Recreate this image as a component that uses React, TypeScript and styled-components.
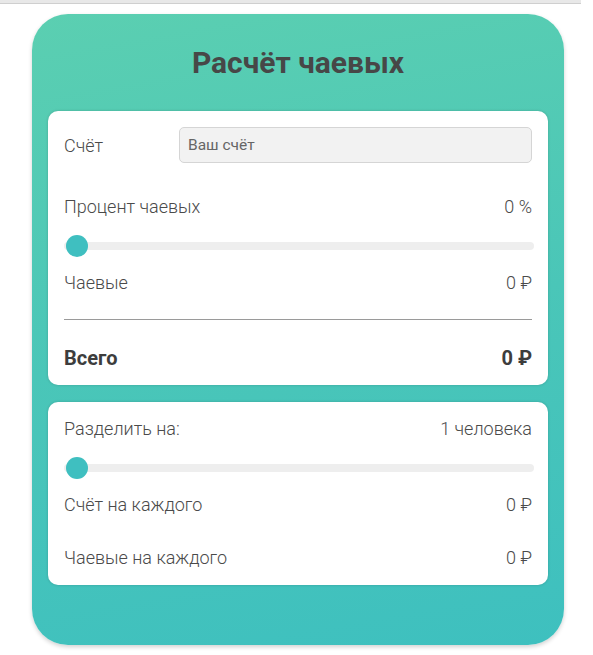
import React, { useState } from "react";
import styled, { createGlobalStyle } from "styled-components";

const Global = createGlobalStyle`
  html, body { margin: 0; padding: 0; background: #ffffff; }
  body { font-family: Roboto, "Noto Sans", "Liberation Sans", sans-serif; }
  * { box-sizing: border-box; }
`;

const TopBar = styled.div`
  height: 4px;
  background: #e8e8e8;
  border-bottom: 1px solid #cfcfcf;
  margin-right: 12px;
`;

const Page = styled.div`
  padding: 10px 0 10px 32px;
`;

const Calculator = styled.div`
  width: 532px;
  border-radius: 36px;
  background: linear-gradient(170deg, #5bcfb1 0%, #4ac6b8 50%, #3ec0bf 100%);
  box-shadow: 0 2px 4px rgba(0, 0, 0, 0.18);
  padding: 31px 16px 60px;
`;

const Title = styled.h1`
  margin: 0 0 30px;
  text-align: center;
  font-size: 30px;
  line-height: 36px;
  font-weight: 700;
  color: #474747;
`;

const Card = styled.div`
  background: #ffffff;
  border-radius: 10px;
  box-shadow: 0 0 3px rgba(0, 0, 0, 0.18);
  padding: 16px;
  & + & {
    margin-top: 17px;
  }
`;

const Row = styled.div<{ $mt?: number; $strong?: boolean }>`
  display: flex;
  justify-content: space-between;
  align-items: center;
  margin-top: ${(p) => p.$mt ?? 0}px;
  font-size: ${(p) => (p.$strong ? 20 : 18)}px;
  line-height: 22px;
  font-weight: ${(p) => (p.$strong ? 700 : 300)};
  color: ${(p) => (p.$strong ? "#3d3d3d" : "#4a4a4a")};
`;

const Value = styled.span`
  color: inherit;
`;

const BillRow = styled.div`
  display: flex;
  align-items: center;
  font-size: 18px;
  font-weight: 300;
  color: #4a4a4a;
`;

const BillLabel = styled.span`
  width: 115px;
  flex: none;
`;

const BillInput = styled.input`
  flex: 1;
  height: 36px;
  border: 1px solid #d5d5d5;
  border-radius: 5px;
  background: #f2f2f2;
  padding: 0 8px;
  font-family: inherit;
  font-size: 15.5px;
  font-weight: 400;
  color: #444;
  outline: none;
  &::placeholder {
    color: #666666;
  }
`;

const Slider = styled.input<{ $mt?: number }>`
  -webkit-appearance: none;
  appearance: none;
  display: block;
  width: calc(100% + 2px);
  height: 22px;
  margin: ${(p) => p.$mt ?? 0}px 0 0;
  background: transparent;
  outline: none;
  &::-webkit-slider-runnable-track {
    height: 8px;
    border-radius: 4px;
    background: #eeeeee;
  }
  &::-webkit-slider-thumb {
    -webkit-appearance: none;
    appearance: none;
    width: 22px;
    height: 22px;
    margin-top: -7px;
    margin-left: 2px;
    border-radius: 50%;
    background: #3fbfc0;
    border: none;
  }
  &::-moz-range-track {
    height: 8px;
    border-radius: 4px;
    background: #eeeeee;
  }
  &::-moz-range-thumb {
    width: 22px;
    height: 22px;
    border-radius: 50%;
    background: #3fbfc0;
    border: none;
  }
`;

const Divider = styled.hr`
  margin: 25px 0 0;
  border: none;
  border-top: 1px solid #9a9a9a;
  height: 0;
`;

export default function App() {
  const [bill, setBill] = useState("");
  const [percent, setPercent] = useState(0);
  const [people, setPeople] = useState(1);

  const b = parseFloat(bill) || 0;
  const tip = Math.round((b * percent) / 100);
  const total = b + tip;

  return (
    <>
      <Global />
      <TopBar />
      <Page>
        <Calculator>
          <Title>Расчёт чаевых</Title>
          <Card>
            <BillRow>
              <BillLabel>Счёт</BillLabel>
              <BillInput
                placeholder="Ваш счёт"
                value={bill}
                onChange={(e) => setBill(e.target.value)}
              />
            </BillRow>
            <Row $mt={33}>
              <span>Процент чаевых</span>
              <Value>{percent} %</Value>
            </Row>
            <Slider
              type="range"
              min={0}
              max={100}
              value={percent}
              $mt={17}
              onChange={(e) => setPercent(Number(e.target.value))}
            />
            <Row $mt={15}>
              <span>Чаевые</span>
              <Value>{tip} ₽</Value>
            </Row>
            <Divider />
            <Row $mt={27} $strong>
              <span>Всего</span>
              <Value>{total} ₽</Value>
            </Row>
          </Card>
          <Card>
            <Row>
              <span>Разделить на:</span>
              <Value>{people} человека</Value>
            </Row>
            <Slider
              type="range"
              min={1}
              max={20}
              value={people}
              $mt={17}
              onChange={(e) => setPeople(Number(e.target.value))}
            />
            <Row $mt={15}>
              <span>Счёт на каждого</span>
              <Value>{Math.round(total / people)} ₽</Value>
            </Row>
            <Row $mt={31}>
              <span>Чаевые на каждого</span>
              <Value>{Math.round(tip / people)} ₽</Value>
            </Row>
          </Card>
        </Calculator>
      </Page>
    </>
  );
}
